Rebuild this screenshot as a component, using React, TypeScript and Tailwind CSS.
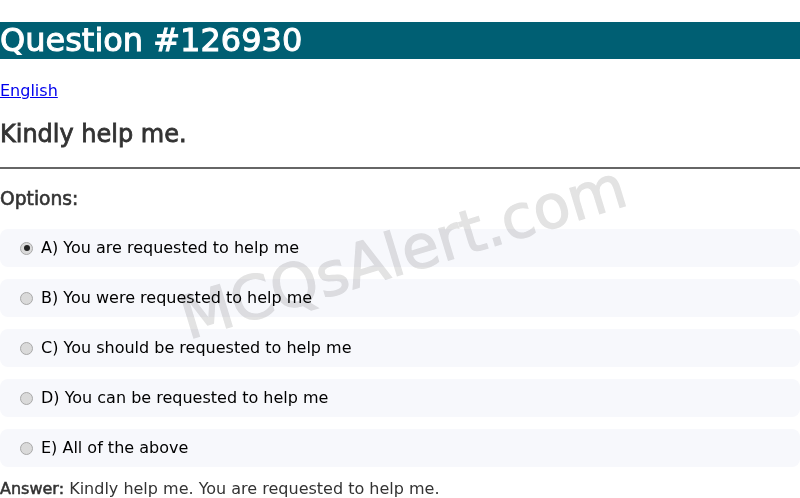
export default function App() {
  const options = [
    "A) You are requested to help me",
    "B) You were requested to help me",
    "C) You should be requested to help me",
    "D) You can be requested to help me",
    "E) All of the above",
  ];

  return (
    <div
      className="relative bg-white min-h-[498px] overflow-hidden text-base text-black"
      style={{ fontFamily: '"DejaVu Sans", sans-serif' }}
    >
      <h1 className="mt-[22px] mb-[22px] bg-[#005f73] text-white text-[32px] font-normal leading-[37px] [-webkit-text-stroke:1px_white]">
        Question #126930
      </h1>

      <p className="leading-[19px]">
        <a href="#" className="text-[#0000ee] underline">
          English
        </a>
      </p>

      <h2 className="mt-[20px] text-[24px] font-normal leading-[28px] text-[#333] [-webkit-text-stroke:0.8px_#333]">
        Kindly help me.
      </h2>

      <hr className="mt-[19px] border-0 border-t-2 border-[#666]" />

      <h3 className="mt-[19px] text-[18.7px] font-normal leading-[22px] text-[#333] [-webkit-text-stroke:0.6px_#333]">
        Options:
      </h3>

      {/* Options */}
      <div className="mt-[19px] flex flex-col gap-3">
        {options.map((opt, i) => (
          <label
            key={i}
            className="flex items-center h-[38px] pl-5 rounded-lg bg-[#f7f8fc]"
          >
            <span className="w-[13px] h-[13px] mr-2 rounded-full border border-[#a9a9a9] bg-[#dadada] flex items-center justify-center shrink-0">
              {i === 0 && (
                <span className="w-[6px] h-[6px] rounded-full bg-[#222]" />
              )}
            </span>
            <span>{opt}</span>
          </label>
        ))}
      </div>

      <p className="mt-3 leading-[19px] text-[#333]">
        <span className="[-webkit-text-stroke:0.5px_#333]">Answer:</span>{" "}
        Kindly help me. You are requested to help me.
      </p>

      {/* Watermark */}
      <div className="pointer-events-none absolute left-[403px] top-[252px] -translate-x-1/2 -translate-y-1/2 -rotate-[17deg] text-[60px] font-normal text-[#e3e3e3] mix-blend-multiply whitespace-nowrap [-webkit-text-stroke:1.3px_#e3e3e3]">
        MCQsAlert.com
      </div>
    </div>
  );
}
